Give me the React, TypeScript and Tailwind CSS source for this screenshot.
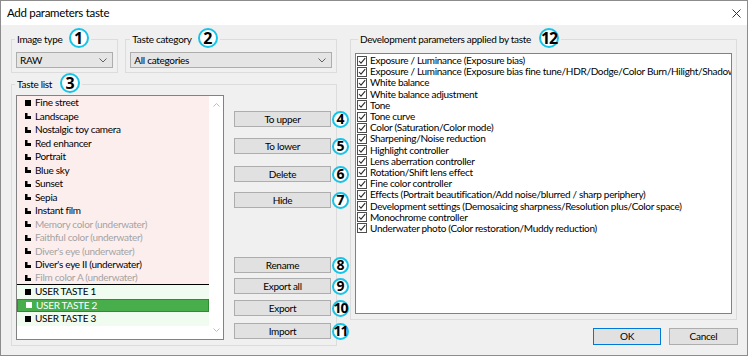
import React from 'react';

type Taste = {
  name: string;
  icon: 'square' | 'corner';
  dim?: boolean;
  group: 'preset' | 'user';
  selected?: boolean;
};

const tastes: Taste[] = [
  { name: 'Fine street', icon: 'square', group: 'preset' },
  { name: 'Landscape', icon: 'corner', group: 'preset' },
  { name: 'Nostalgic toy camera', icon: 'corner', group: 'preset' },
  { name: 'Red enhancer', icon: 'corner', group: 'preset' },
  { name: 'Portrait', icon: 'corner', group: 'preset' },
  { name: 'Blue sky', icon: 'corner', group: 'preset' },
  { name: 'Sunset', icon: 'corner', group: 'preset' },
  { name: 'Sepia', icon: 'corner', group: 'preset' },
  { name: 'Instant film', icon: 'corner', group: 'preset' },
  { name: 'Memory color (underwater)', icon: 'corner', dim: true, group: 'preset' },
  { name: 'Faithful color (underwater)', icon: 'corner', dim: true, group: 'preset' },
  { name: "Diver's eye (underwater)", icon: 'corner', dim: true, group: 'preset' },
  { name: "Diver's eye II (underwater)", icon: 'corner', group: 'preset' },
  { name: 'Film color A (underwater)', icon: 'corner', dim: true, group: 'preset' },
  { name: 'USER TASTE 1', icon: 'square', group: 'user' },
  { name: 'USER TASTE 2', icon: 'square', group: 'user', selected: true },
  { name: 'USER TASTE 3', icon: 'square', group: 'user' },
];

const params = [
  'Exposure / Luminance (Exposure bias)',
  'Exposure / Luminance (Exposure bias fine tune/HDR/Dodge/Color Burn/Hilight/Shadow)',
  'White balance',
  'White balance adjustment',
  'Tone',
  'Tone curve',
  'Color (Saturation/Color mode)',
  'Sharpening/Noise reduction',
  'Highlight controller',
  'Lens aberration controller',
  'Rotation/Shift lens effect',
  'Fine color controller',
  'Effects (Portrait beautification/Add noise/blurred / sharp periphery)',
  'Development settings (Demosaicing sharpness/Resolution plus/Color space)',
  'Monochrome controller',
  'Underwater photo (Color restoration/Muddy reduction)',
];

const buttons = [
  { label: 'To upper', n: 4, mt: 'mt-[16px]' },
  { label: 'To lower', n: 5, mt: 'mt-[11px]' },
  { label: 'Delete', n: 6, mt: 'mt-[12px]' },
  { label: 'Hide', n: 7, mt: 'mt-[10px]' },
  { label: 'Rename', n: 8, mt: 'mt-[49px]' },
  { label: 'Export all', n: 9, mt: 'mt-[5px]' },
  { label: 'Export', n: 10, mt: 'mt-[6px]' },
  { label: 'Import', n: 11, mt: 'mt-[7px]' },
];

function Badge({ n, small }: { n: number; small?: boolean }) {
  return (
    <span
      className={`inline-flex shrink-0 items-center justify-center rounded-full border-2 border-[#16c4e8] bg-white font-['Noto_Sans',sans-serif] font-bold leading-none text-black ${
        small ? '-my-[1px] h-[17px] w-[17px] text-[14px]' : '-my-[4px] h-[20px] w-[20px] text-[16px]'
      } ${n > 9 ? 'tracking-[-1px]' : 'tracking-normal'}`}
    >
      {n}
    </span>
  );
}

function Chevron() {
  return (
    <svg width="8" height="5" viewBox="0 0 8 5" className="shrink-0">
      <path d="M0.5 0.5 L4 4 L7.5 0.5" fill="none" stroke="#606060" strokeWidth="1" />
    </svg>
  );
}

function Select({ value }: { value: string }) {
  return (
    <div className="flex h-[16px] items-center justify-between border border-[#adadad] bg-[#e5e5e5] pl-[3px] pr-[5px]">
      <span>{value}</span>
      <Chevron />
    </div>
  );
}

function TasteIcon({ kind, light }: { kind: 'square' | 'corner'; light?: boolean }) {
  const c = light ? '#ffffff' : '#000000';
  return (
    <svg width="6" height="6" viewBox="0 0 6 6" className="shrink-0">
      {kind === 'square' ? (
        <rect x="0" y="0" width="6" height="6" fill={c} />
      ) : (
        <path d="M0 0 H2.5 V3 H6 V6 H0 Z" fill={c} />
      )}
    </svg>
  );
}

function Check() {
  return (
    <span className="flex h-[10px] w-[10px] shrink-0 items-center justify-center border border-[#4d4d4d] bg-white">
      <svg width="8" height="8" viewBox="0 0 8 8">
        <path d="M1 4 L3 6.2 L7.2 1.2" fill="none" stroke="#2b2b2b" strokeWidth="1.1" />
      </svg>
    </span>
  );
}

export default function App() {
  return (
    <div className="flex h-[356px] w-[748px] flex-col overflow-hidden border border-[#8c8c8c] bg-[#f0f0f0] font-['Lato','Liberation_Sans',sans-serif] text-[10px] tracking-[-0.3px] text-black">
      {/* title bar */}
      <div className="flex h-[24px] shrink-0 items-center justify-between bg-white pl-[6px] pr-[6px]">
        <span className="text-[11.5px]">Add parameters taste</span>
        <svg width="9" height="9" viewBox="0 0 9 9">
          <path d="M0.5 0.5 L8.5 8.5 M8.5 0.5 L0.5 8.5" stroke="#333" strokeWidth="1" />
        </svg>
      </div>

      <div className="flex pl-[10px] pt-[8px]">
        {/* left column */}
        <div className="flex w-[326px] flex-col">
          <div className="flex">
            <fieldset className="w-[108px] min-w-0 border border-[#dcdcdc]">
              <legend className="ml-[3px] flex h-[12px] items-center px-[2px] leading-[12px]">
                <span>Image type</span>
                <span className="ml-[6px]">
                  <Badge n={1} />
                </span>
              </legend>
              <div className="px-[4px] pb-[4px] pt-[7px]">
                <Select value="RAW" />
              </div>
            </fieldset>
            <fieldset className="ml-[7px] w-[213px] min-w-0 border border-[#dcdcdc]">
              <legend className="ml-[4px] flex h-[12px] items-center px-[2px] leading-[12px]">
                <span>Taste category</span>
                <span className="ml-[6px]">
                  <Badge n={2} />
                </span>
              </legend>
              <div className="px-[4px] pb-[4px] pt-[7px]">
                <Select value="All categories" />
              </div>
            </fieldset>
          </div>

          <fieldset className="mt-[5px] w-[326px] min-w-0 border border-[#dcdcdc]">
            <legend className="ml-[3px] flex h-[12px] items-center px-[2px] leading-[12px]">
              <span>Taste list</span>
              <span className="ml-[8px]">
                <Badge n={3} />
              </span>
            </legend>
            <div className="flex items-start pb-[5px] pl-[4px] pt-[5px]">
              <div className="flex h-[245px] w-[208px] shrink-0 border border-[#828282] bg-white">
                <div className="flex w-[192px] flex-col">
                  {tastes.map((t, i) => (
                    <div
                      key={t.name}
                      className={`flex h-[13.5px] shrink-0 items-center gap-[4px] pl-[8px] ${
                        t.selected
                          ? 'border border-[#2f8a34] bg-[#47ae4b] pl-[7px] text-white'
                          : t.group === 'user'
                          ? 'bg-[#effcef]'
                          : 'bg-[#fdeeee]'
                      } ${t.dim ? 'text-[#a3a3a3]' : ''} ${i === 13 ? 'border-b border-black' : ''}`}
                    >
                      <TasteIcon kind={t.icon} light={t.selected} />
                      <span className="whitespace-nowrap">{t.name}</span>
                    </div>
                  ))}
                </div>
                <div className="flex flex-1 flex-col items-center justify-between py-[7px]">
                  <svg width="7" height="4" viewBox="0 0 7 4">
                    <path d="M0.5 3.5 L3.5 0.5 L6.5 3.5" fill="none" stroke="#bdbdbd" />
                  </svg>
                  <svg width="7" height="4" viewBox="0 0 7 4">
                    <path d="M0.5 0.5 L3.5 3.5 L6.5 0.5" fill="none" stroke="#bdbdbd" />
                  </svg>
                </div>
              </div>

              <div className="ml-[10px] flex flex-col">
                {buttons.map((b) => (
                  <div key={b.label} className={`flex items-center ${b.mt}`}>
                    <button className="flex h-[16px] w-[97px] items-center justify-center border border-[#adadad] bg-[#e1e1e1] leading-none">
                      {b.label}
                    </button>
                    <span className="ml-[1px] flex">
                      <Badge n={b.n} small />
                    </span>
                  </div>
                ))}
              </div>
            </div>
          </fieldset>
        </div>

        {/* right column */}
        <div className="ml-[13px] flex w-[388px] flex-col">
          <fieldset className="w-[387px] min-w-0 border border-[#dcdcdc]">
            <legend className="ml-[7px] flex h-[12px] items-center px-[2px] leading-[12px]">
              <span>Development parameters applied by taste</span>
              <span className="ml-[8px]">
                <Badge n={12} />
              </span>
            </legend>
            <div className="px-[4px] pb-[5px] pt-[8px]">
              <div className="flex h-[261px] flex-col overflow-hidden border border-[#828282] bg-white pl-[1px] pt-[1px]">
                {params.map((p) => (
                  <div key={p} className="flex h-[11.2px] shrink-0 items-center gap-[3px] whitespace-nowrap">
                    <Check />
                    <span>{p}</span>
                  </div>
                ))}
              </div>
            </div>
          </fieldset>
          <div className="mt-[8px] flex justify-end gap-[8px]">
            <button className="flex h-[17px] w-[68px] items-center justify-center border border-[#0078d7] bg-[#e1e1e1]">
              OK
            </button>
            <button className="flex h-[17px] w-[69px] items-center justify-center border border-[#adadad] bg-[#e1e1e1]">
              Cancel
            </button>
          </div>
        </div>
      </div>
    </div>
  );
}
